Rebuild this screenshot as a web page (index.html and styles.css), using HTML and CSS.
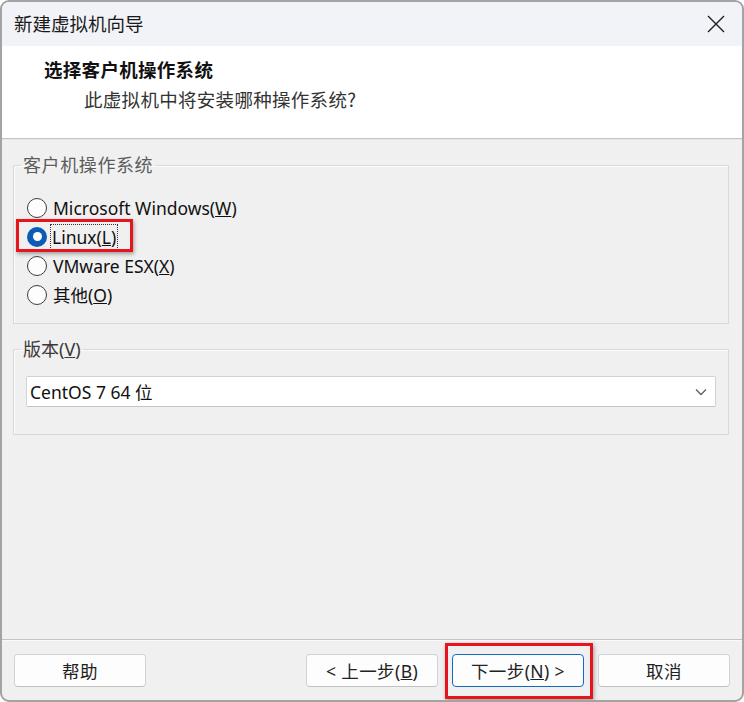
FILE: index.html
```html
<!DOCTYPE html>
<html lang="zh-CN">
<head>
    <meta charset="UTF-8">
    <meta name="viewport" content="width=device-width, initial-scale=1.0">
    <title>新建虚拟机向导</title>
    <link rel="stylesheet" href="styles.css">
</head>
<body>
    <div class="window">
        <div class="titlebar">
            <span class="title">新建虚拟机向导</span>
            <svg class="close" width="18" height="18" viewBox="0 0 18 18">
                <path d="M1 1 L17 17 M17 1 L1 17" stroke="#1f1f1f" stroke-width="1.4" fill="none"/>
            </svg>
        </div>

        <div class="header">
            <div class="header-title">选择客户机操作系统</div>
            <div class="header-sub">此虚拟机中将安装哪种操作系统?</div>
        </div>

        <div class="content">
            <fieldset class="group group-os">
                <legend>客户机操作系统</legend>
                <div class="radio-row">
                    <span class="radio"></span>
                    <span class="label">Microsoft Windows(<u>W</u>)</span>
                </div>
                <div class="radio-row">
                    <span class="radio checked"></span>
                    <span class="label focused">Linux(<u>L</u>)</span>
                    <span class="mark mark-linux"></span>
                </div>
                <div class="radio-row">
                    <span class="radio"></span>
                    <span class="label">VMware ESX(<u>X</u>)</span>
                </div>
                <div class="radio-row">
                    <span class="radio"></span>
                    <span class="label">其他(<u>O</u>)</span>
                </div>
            </fieldset>

            <fieldset class="group group-version">
                <legend class="dark">版本(<u>V</u>)</legend>
                <div class="select">
                    <span>CentOS 7 64 位</span>
                    <svg width="12" height="8" viewBox="0 0 12 8">
                        <path d="M1 1.5 L6 6.5 L11 1.5" stroke="#606060" stroke-width="1.3" fill="none"/>
                    </svg>
                </div>
            </fieldset>
        </div>

        <div class="footer">
            <button class="btn">帮助</button>
            <div class="spacer"></div>
            <button class="btn">&lt; 上一步(<u>B</u>)</button>
            <button class="btn default">下一步(<u>N</u>) &gt;<span class="mark mark-next"></span></button>
            <button class="btn">取消</button>
        </div>
    </div>
</body>
</html>
```

FILE: styles.css
```css
html, body {
    margin: 0;
    padding: 0;
    background: #ffffff;
}
body {
    font-family: "Noto Sans", "Noto Sans CJK SC", sans-serif;
    color: #1a1a1a;
}
.window {
    box-sizing: border-box;
    width: 744px;
    height: 702px;
    border: 2px solid #a3a3a3;
    border-radius: 9px;
    overflow: hidden;
    background: #f0f0f0;
    display: flex;
    flex-direction: column;
}
.titlebar {
    height: 44px;
    flex: none;
    background: #f2f3f8;
    display: flex;
    align-items: center;
    justify-content: space-between;
    padding: 0 17px 0 12px;
}
.title {
    font-family: "Noto Sans CJK SC", sans-serif;
    font-size: 18.5px;
    color: #1a1a1a;
    margin-top: -2px;
}
.close {
    margin-top: -1px;
}
.header {
    height: 93px;
    flex: none;
    box-sizing: border-box;
    background: #ffffff;
    border-bottom: 1px solid #c6c6c6;
    box-shadow: 0 1px 0 #e6e6e6;
    padding: 8px 0 0 42px;
}
.header-title {
    font-family: "Noto Sans CJK SC", sans-serif;
    font-size: 18.5px;
    font-weight: 700;
    line-height: 30px;
    color: #111;
    letter-spacing: 0.3px;
}
.header-sub {
    font-family: "Noto Sans CJK SC", sans-serif;
    font-size: 18.5px;
    line-height: 30px;
    color: #333;
    padding-left: 40px;
    letter-spacing: 0.3px;
}
.content {
    flex: 1;
    padding: 15px 13px 0 11px;
    margin-top: 1px;
}
.group {
    margin: 0;
    padding: 0;
    border: 1px solid #d9d9d9;
    box-shadow: inset 1px 1px 0 #fbfbfb;
}
.group legend {
    font-size: 18px;
    line-height: 20px;
    color: #5c5c5c;
    padding: 0 2px;
    margin-left: -6px;
    letter-spacing: 0.6px;
}
.group legend.dark {
    color: #3a3a3a;
    letter-spacing: 0;
    margin-left: -5px;
}
.group-os {
    padding: 18px 0 14px 13px;
}
.group-version {
    margin-top: 15px;
    padding: 17px 12px 27px 12px;
}
.radio-row {
    position: relative;
    height: 29px;
    display: flex;
    align-items: center;
    font-size: 17.5px;
    color: #111;
}
.radio {
    box-sizing: border-box;
    width: 20px;
    height: 20px;
    border: 1px solid #3c3c3c;
    border-radius: 50%;
    background: #fdfdfd;
    margin-right: 6px;
    flex: none;
}
.radio.checked {
    border: none;
    background: #0a5cb4;
    display: flex;
    align-items: center;
    justify-content: center;
}
.radio.checked::after {
    content: "";
    width: 9px;
    height: 9px;
    border-radius: 50%;
    background: #ffffff;
}
.label {
    line-height: 24px;
}
.label.focused {
    outline: 1px dotted #333;
    outline-offset: 0;
    padding: 0 1px;
    margin-left: -2px;
}
.mark {
    position: absolute;
    box-sizing: border-box;
    border: 3px solid #e8141b;
    box-shadow: 1px 2px 4px rgba(0, 0, 0, 0.35);
    pointer-events: none;
}
.mark-linux {
    left: -11px;
    top: -3px;
    width: 117px;
    height: 33px;
}
.select {
    box-sizing: border-box;
    height: 31px;
    background: #ffffff;
    border: 1px solid #d2d2d2;
    border-bottom-color: #c4c4c4;
    border-radius: 2px;
    display: flex;
    align-items: center;
    justify-content: space-between;
    padding: 0 8px 0 3px;
    font-size: 17.5px;
    color: #111;
}
.footer {
    height: 61px;
    flex: none;
    box-sizing: border-box;
    border-top: 1px solid #c4c4c4;
    box-shadow: inset 0 1px 0 #fafafa;
    display: flex;
    align-items: flex-start;
    gap: 14px;
    padding: 14px 12px 0 12px;
}
.spacer {
    flex: 1;
}
.footer .btn:first-child {
    margin-right: -14px;
}
.btn {
    position: relative;
    box-sizing: border-box;
    width: 132px;
    height: 33px;
    background: #fdfdfd;
    border: 1px solid #d3d3d3;
    border-bottom-color: #c2c2c2;
    border-radius: 4px;
    font-family: "Noto Sans", "Noto Sans CJK SC", sans-serif;
    font-size: 17.5px;
    color: #222;
    padding: 0;
    letter-spacing: 0.4px;
}
.btn.default {
    border: 1px solid #0f6cc2;
}
.mark-next {
    left: -8px;
    top: -12px;
    width: 148px;
    height: 56px;
}
```
